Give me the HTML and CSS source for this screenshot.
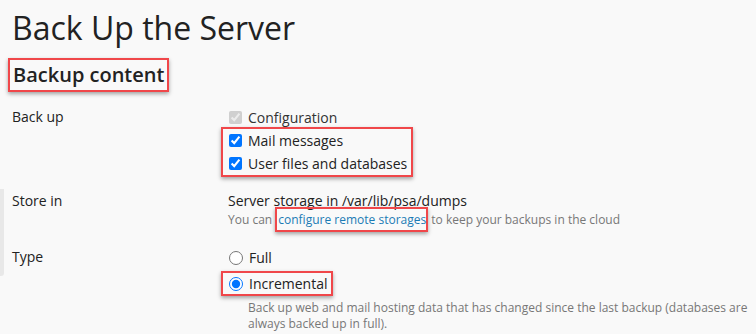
FILE: index.html
```html
<!DOCTYPE html>
<html lang="en">
<head>
  <meta charset="UTF-8" />
  <title>Back Up the Server</title>
  <link rel="stylesheet" href="styles.css">
</head>
<body>

<h1 class="page-title">Back Up the Server</h1>

<div class="section">
  <h2 class="section-title"><span class="mark">Backup content</span></h2>

  <div class="form-row">
    <div class="label">Back up</div>
    <div class="field">
      <label class="option disabled"><input type="checkbox" checked disabled /> Configuration</label>
      <div class="mark mark-group">
        <label class="option"><input type="checkbox" checked /> Mail messages</label>
        <label class="option"><input type="checkbox" checked /> User files and databases</label>
      </div>
    </div>
  </div>

  <div class="side-block">
    <div class="form-row">
      <div class="label">Store in</div>
      <div class="field">
        <div class="value">Server storage in /var/lib/psa/dumps</div>
        <div class="hint">You can <a href="#" class="mark mark-inline">configure remote storages</a> to keep your backups in the cloud</div>
      </div>
    </div>

    <div class="form-row type-row">
      <div class="label">Type</div>
      <div class="field">
        <label class="option"><input type="radio" name="type" /> Full</label>
        <label class="option mark mark-radio"><input type="radio" name="type" checked /> Incremental</label>
        <div class="hint desc">Back up web and mail hosting data that has changed since the last backup (databases are always backed up in full).</div>
      </div>
    </div>
  </div>
</div>

</body>
</html>
```

FILE: styles.css
```css
body {
  background-color: #f9f9f9;
  color: #222;
  font-family: "Open Sans", Arial, sans-serif;
  font-size: 14px;
  margin: 0;
  overflow: hidden;
}

.page-title {
  font-size: 32px;
  font-weight: 400;
  line-height: 40px;
  margin: 8px 0 0 12px;
}

.section-title {
  font-size: 20px;
  font-weight: 600;
  line-height: 26px;
  margin: 10px 0 14px 8px;
}

/* red highlight boxes from the screenshot */
.mark {
  border: 2.5px solid #f0474a;
  box-shadow: 0 2px 4px rgba(0,0,0,0.35);
}

.section-title .mark {
  display: inline-block;
  padding: 2px 3px 2px 3px;
}

.form-row {
  display: flex;
  padding-left: 12px;
}

.label {
  width: 216px;
  flex-shrink: 0;
  line-height: 22px;
}

.field {
  flex: 1;
}

.option {
  display: flex;
  align-items: center;
  line-height: 23px;
  gap: 6px;
}

.option input {
  margin: 0 0 0 1px;
  width: 13px;
  height: 13px;
}

.option.disabled {
  color: #333;
}

.mark-group {
  display: inline-block;
  margin: -2px 0 0 -7px;
  padding: 0 4px 0 5px;
}

/* grey bar on the left edge */
.side-block {
  position: relative;
  margin-top: 13px;
}

.side-block::before {
  content: "";
  position: absolute;
  left: 0;
  top: -1px;
  width: 4px;
  height: 87px;
  background: #e8e8e8;
  border-radius: 0 0 3px 0;
}

.value {
  line-height: 22px;
}

.hint {
  font-size: 12px;
  color: #777;
  line-height: 16px;
}

.hint a {
  color: #1b7bb5;
  text-decoration: none;
}

.mark-inline {
  padding: 2px 0 2px 1px;
}

.type-row {
  margin-top: 18px;
}

.type-row .option input {
  width: 14px;
  height: 14px;
}

.mark-radio {
  display: inline-flex;
  margin: 2px 0 0 -7px;
  padding: 0 3px 0 5px;
  line-height: 21px;
}

.desc {
  margin: 4px 0 0 20px;
}
```
